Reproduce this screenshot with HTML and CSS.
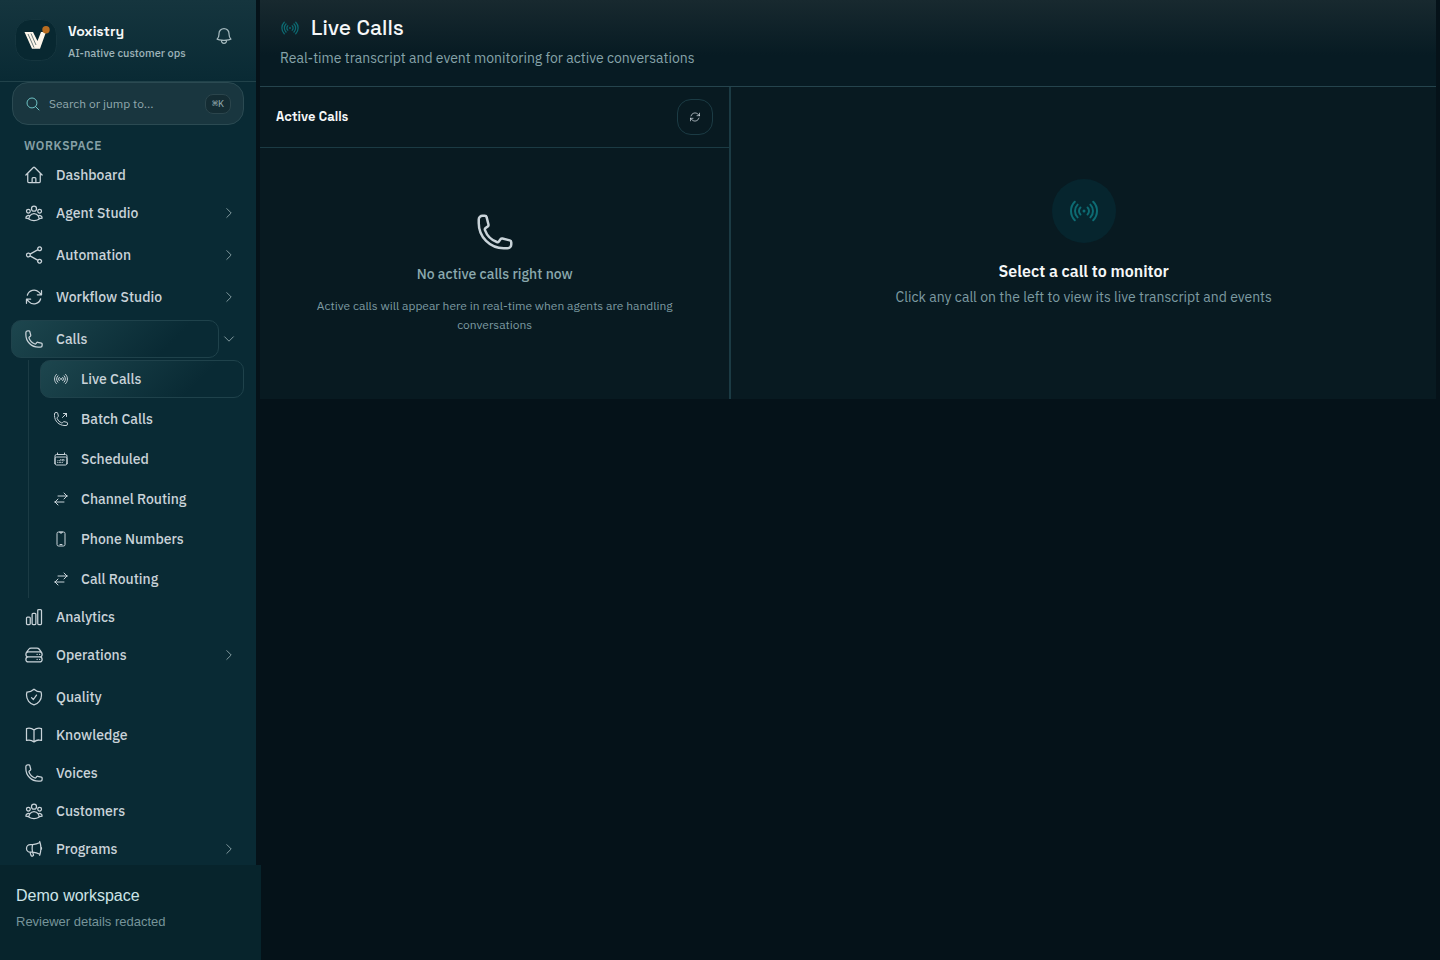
FILE: index.html
```html
<!DOCTYPE html>
<html lang="en">
<head>
<meta charset="utf-8">
<meta name="viewport" content="width=device-width, initial-scale=1">
<title>Live Calls - Voxistry</title>
<link rel="stylesheet" href="styles.css">
</head>
<body>
<svg class="sprite" aria-hidden="true">
  <symbol id="home" viewBox="0 0 24 24"><path d="m2.25 12 8.954-8.955c.44-.439 1.152-.439 1.591 0L21.75 12M4.5 9.75v10.125c0 .621.504 1.125 1.125 1.125H9.75v-4.875c0-.621.504-1.125 1.125-1.125h2.25c.621 0 1.125.504 1.125 1.125V21h4.125c.621 0 1.125-.504 1.125-1.125V9.75M8.25 21h8.25"/></symbol>
  <symbol id="group" viewBox="0 0 24 24"><path d="M18 18.72a9.094 9.094 0 0 0 3.741-.479 3 3 0 0 0-4.682-2.72m.94 3.198.001.031c0 .225-.012.447-.037.666A11.944 11.944 0 0 1 12 21c-2.17 0-4.207-.576-5.963-1.584A6.062 6.062 0 0 1 6 18.719m12 0a5.971 5.971 0 0 0-.941-3.197m0 0A5.995 5.995 0 0 0 12 12.75a5.995 5.995 0 0 0-5.058 2.772m0 0a3 3 0 0 0-4.681 2.72 8.986 8.986 0 0 0 3.74.477m.94-3.197a5.971 5.971 0 0 0-.94 3.197M15 6.75a3 3 0 1 1-6 0 3 3 0 0 1 6 0Zm6 3a2.25 2.25 0 1 1-4.5 0 2.25 2.25 0 0 1 4.5 0Zm-13.5 0a2.25 2.25 0 1 1-4.5 0 2.25 2.25 0 0 1 4.5 0Z"/></symbol>
  <symbol id="share" viewBox="0 0 24 24"><path d="M7.217 10.907a2.25 2.25 0 1 0 0 2.186m0-2.186c.18.324.283.696.283 1.093s-.103.77-.283 1.093m0-2.186 9.566-5.314m-9.566 7.5 9.566 5.314m0 0a2.25 2.25 0 1 0 3.935 2.186 2.25 2.25 0 0 0-3.935-2.186Zm0-12.814a2.25 2.25 0 1 0 3.933-2.185 2.25 2.25 0 0 0-3.933 2.185Z"/></symbol>
  <symbol id="refresh" viewBox="0 0 24 24"><path d="M16.023 9.348h4.992v-.001M2.985 19.644v-4.992m0 0h4.992m-4.993 0 3.181 3.183a8.25 8.25 0 0 0 13.803-3.7M4.031 9.865a8.25 8.25 0 0 1 13.803-3.7l3.181 3.182m0-4.991v4.99"/></symbol>
  <symbol id="phone" viewBox="0 0 24 24"><path d="M2.25 6.75c0 8.284 6.716 15 15 15h2.25a2.25 2.25 0 0 0 2.25-2.25v-1.372c0-.516-.351-.966-.852-1.091l-4.423-1.106c-.44-.11-.902.055-1.173.417l-.97 1.293c-.282.376-.769.542-1.21.38a12.035 12.035 0 0 1-7.143-7.143c-.162-.441.004-.928.38-1.21l1.293-.97c.363-.271.527-.734.417-1.173L6.963 3.102a1.125 1.125 0 0 0-1.091-.852H4.5A2.25 2.25 0 0 0 2.25 4.5v2.25Z"/></symbol>
  <symbol id="phone-out" viewBox="0 0 24 24"><path d="M20.25 3.75v4.5m0-4.5h-4.5m4.5 0-6 6m3 12c-8.284 0-15-6.716-15-15V4.5A2.25 2.25 0 0 1 4.5 2.25h1.372c.516 0 .966.351 1.091.852l1.106 4.423c.11.44-.054.902-.417 1.173l-1.293.97a1.062 1.062 0 0 0-.38 1.21 12.035 12.035 0 0 0 7.143 7.143c.441.162.928-.004 1.21-.38l.97-1.293a1.125 1.125 0 0 1 1.173-.417l4.423 1.106c.5.125.852.575.852 1.091V19.5a2.25 2.25 0 0 1-2.25 2.25h-2.25Z"/></symbol>
  <symbol id="signal" viewBox="0 0 24 24"><path d="M9.348 14.652a3.75 3.75 0 0 1 0-5.304m5.304 0a3.75 3.75 0 0 1 0 5.304m-7.425 2.121a6.75 6.75 0 0 1 0-9.546m9.546 0a6.75 6.75 0 0 1 0 9.546M5.106 18.894c-3.808-3.807-3.808-9.98 0-13.788m13.788 0c3.808 3.807 3.808 9.98 0 13.788M12 12h.008v.008H12V12Zm.375 0a.375.375 0 1 1-.75 0 .375.375 0 0 1 .75 0Z"/></symbol>
  <symbol id="calendar" viewBox="0 0 24 24"><path d="M6.75 3v2.25M17.25 3v2.25M3 18.75V7.5a2.25 2.25 0 0 1 2.25-2.25h13.5A2.25 2.25 0 0 1 21 7.5v11.25m-18 0A2.25 2.25 0 0 0 5.250 21h13.5A2.25 2.25 0 0 0 21 18.75m-18 0v-7.5A2.25 2.25 0 0 1 5.25 9h13.5A2.25 2.25 0 0 1 21 11.25v7.5m-9-6h.008v.008H12v-.008ZM12 15h.008v.008H12V15Zm0 2.25h.008v.008H12v-.008ZM9.75 15h.008v.008H9.75V15Zm0 2.25h.008v.008H9.75v-.008ZM7.5 15h.008v.008H7.5V15Zm0 2.25h.008v.008H7.5v-.008Zm6.75-4.5h.008v.008h-.008v-.008Zm0 2.25h.008v.008h-.008V15Zm0 2.25h.008v.008h-.008v-.008Zm2.25-4.5h.008v.008H16.5v-.008Zm0 2.25h.008v.008H16.5V15Z"/></symbol>
  <symbol id="swap" viewBox="0 0 24 24"><path d="M7.5 21 3 16.5m0 0L7.5 12M3 16.5h13.5m0-13.5L21 7.5m0 0L16.5 12M21 7.5H7.5"/></symbol>
  <symbol id="mobile" viewBox="0 0 24 24"><path d="M10.5 1.5H8.25A2.25 2.25 0 0 0 6 3.75v16.5a2.25 2.25 0 0 0 2.25 2.25h7.5A2.25 2.25 0 0 0 18 20.25V3.75a2.25 2.25 0 0 0-2.25-2.25H13.5m-3 0V3h3V1.5m-3 0h3m-3 18.75h3"/></symbol>
  <symbol id="chart" viewBox="0 0 24 24"><path d="M3 13.125C3 12.504 3.504 12 4.125 12h2.25c.621 0 1.125.504 1.125 1.125v6.75C7.5 20.496 6.996 21 6.375 21h-2.25A1.125 1.125 0 0 1 3 19.875v-6.75ZM9.75 8.625c0-.621.504-1.125 1.125-1.125h2.25c.621 0 1.125.504 1.125 1.125v11.25c0 .621-.504 1.125-1.125 1.125h-2.25a1.125 1.125 0 0 1-1.125-1.125V8.625ZM16.5 4.125c0-.621.504-1.125 1.125-1.125h2.25C20.496 3 21 3.504 21 4.125v15.75c0 .621-.504 1.125-1.125 1.125h-2.25a1.125 1.125 0 0 1-1.125-1.125V4.125Z"/></symbol>
  <symbol id="server" viewBox="0 0 24 24"><path d="M5.25 14.25h13.5m-13.5 0a3 3 0 0 1-3-3m3 3a3 3 0 1 0 0 6h13.5a3 3 0 1 0 0-6m-16.5-3a3 3 0 0 1 3-3h13.5a3 3 0 0 1 3 3m-19.5 0a4.5 4.5 0 0 1 .9-2.7L5.737 5.1a3.375 3.375 0 0 1 2.7-1.35h7.126c1.062 0 2.062.5 2.7 1.35l2.587 3.45a4.5 4.5 0 0 1 .9 2.7m0 0a3 3 0 0 1-3 3m0 3h.008v.008h-.008v-.008Zm0-6h.008v.008h-.008v-.008Zm-3 6h.008v.008h-.008v-.008Zm0-6h.008v.008h-.008v-.008Z"/></symbol>
  <symbol id="shield" viewBox="0 0 24 24"><path d="M9 12.75 11.25 15 15 9.75m-3-7.036A11.959 11.959 0 0 1 3.598 6 11.99 11.99 0 0 0 3 9.749c0 5.592 3.824 10.29 9 11.623 5.176-1.332 9-6.03 9-11.622 0-1.31-.21-2.571-.598-3.751h-.152c-3.196 0-6.1-1.248-8.25-3.285Z"/></symbol>
  <symbol id="book" viewBox="0 0 24 24"><path d="M12 6.042A8.967 8.967 0 0 0 6 3.75c-1.052 0-2.062.18-3 .512v14.25A8.987 8.987 0 0 1 6 18c2.305 0 4.408.867 6 2.292m0-14.25a8.966 8.966 0 0 1 6-2.292c1.052 0 2.062.18 3 .512v14.25A8.987 8.987 0 0 0 18 18a8.967 8.967 0 0 0-6 2.292m0-14.25v14.25"/></symbol>
  <symbol id="megaphone" viewBox="0 0 24 24"><path d="M10.34 15.84c-.688-.06-1.386-.09-2.09-.09H7.5a4.5 4.5 0 1 1 0-9h.75c.704 0 1.402-.03 2.09-.09m0 9.18c.253.962.584 1.892.985 2.783.247.55.06 1.21-.463 1.511l-.657.38c-.551.318-1.26.117-1.527-.461a20.845 20.845 0 0 1-1.44-4.282m3.102.069a18.03 18.03 0 0 1-.59-4.59c0-1.586.205-3.124.59-4.59m0 9.18a23.848 23.848 0 0 1 8.835 2.535M10.34 6.66a23.847 23.847 0 0 0 8.835-2.535m0 0A23.74 23.74 0 0 0 18.795 3m.38 1.125a23.91 23.91 0 0 1 1.014 5.395m-1.014 8.855c-.118.38-.245.754-.38 1.125m.38-1.125a23.91 23.91 0 0 0 1.014-5.395m0-3.46c.495.413.811 1.035.811 1.73 0 .695-.316 1.317-.811 1.73m0-3.46a24.347 24.347 0 0 1 0 3.46"/></symbol>
  <symbol id="bell" viewBox="0 0 24 24"><path d="M14.857 17.082a23.848 23.848 0 0 0 5.454-1.31A8.967 8.967 0 0 1 18 9.75V9A6 6 0 0 0 6 9v.75a8.967 8.967 0 0 1-2.312 6.022c1.733.64 3.56 1.085 5.455 1.31m5.714 0a24.255 24.255 0 0 1-5.714 0m5.714 0a3 3 0 1 1-5.714 0"/></symbol>
  <symbol id="search" viewBox="0 0 24 24"><path d="m21 21-5.197-5.197m0 0A7.5 7.5 0 1 0 5.196 5.196a7.5 7.5 0 0 0 10.607 10.607Z"/></symbol>
  <symbol id="right" viewBox="0 0 24 24"><path d="m8.25 4.5 7.5 7.5-7.5 7.5"/></symbol>
  <symbol id="down" viewBox="0 0 24 24"><path d="m19.5 8.25-7.5 7.5-7.5-7.5"/></symbol>
</svg>

<div class="app">
  <aside class="sidebar">
    <header class="brand">
      <svg class="brand-logo" viewBox="0 0 42 42" aria-hidden="true">
        <rect class="logo-tile" x=".5" y=".5" width="41" height="41" rx="15"/>
        <path class="logo-mark" d="M9.500 13H18L22.500 22L26 13H31L25 29.700H17Z"/>
        <path class="logo-cut" d="m13 15 6 13.500M16 14.500l5 11.500"/>
        <circle class="logo-dot" cx="31" cy="10.700" r="3.700"/>
      </svg>
      <div class="brand-text">
        <strong class="brand-name">Voxistry</strong>
        <span class="brand-tag">AI-native customer ops</span>
      </div>
      <button class="bell" type="button" aria-label="Notifications"><svg class="icon icon-lg"><use href="#bell"/></svg></button>
    </header>

    <div class="search">
      <svg class="icon icon-md"><use href="#search"/></svg>
      <input class="search-input" type="search" aria-label="Search or jump to" placeholder="Search or jump to...">
      <kbd class="search-key">⌘K</kbd>
    </div>

    <nav class="nav" aria-label="Workspace">
      <h2 class="nav-title">Workspace</h2>
      <a class="nav-link" href="#"><svg class="icon icon-lg"><use href="#home"/></svg>Dashboard</a>
      <div class="nav-group"><a class="nav-link" href="#"><svg class="icon icon-lg"><use href="#group"/></svg>Agent Studio</a><button class="nav-toggle" type="button" aria-label="Expand Agent Studio"><svg class="icon icon-sm"><use href="#right"/></svg></button></div>
      <div class="nav-group"><a class="nav-link" href="#"><svg class="icon icon-lg"><use href="#share"/></svg>Automation</a><button class="nav-toggle" type="button" aria-label="Expand Automation"><svg class="icon icon-sm"><use href="#right"/></svg></button></div>
      <div class="nav-group"><a class="nav-link" href="#"><svg class="icon icon-lg"><use href="#refresh"/></svg>Workflow Studio</a><button class="nav-toggle" type="button" aria-label="Expand Workflow Studio"><svg class="icon icon-sm"><use href="#right"/></svg></button></div>
      <div class="nav-group nav-group-open"><a class="nav-link nav-link-active" href="#"><svg class="icon icon-lg"><use href="#phone"/></svg>Calls</a><button class="nav-toggle" type="button" aria-label="Collapse Calls"><svg class="icon icon-sm"><use href="#down"/></svg></button></div>
      <div class="subnav">
        <a class="nav-link sub-link nav-link-active" href="#" aria-current="page"><svg class="icon icon-md"><use href="#signal"/></svg>Live Calls</a>
        <a class="nav-link sub-link" href="#"><svg class="icon icon-md"><use href="#phone-out"/></svg>Batch Calls</a>
        <a class="nav-link sub-link" href="#"><svg class="icon icon-md"><use href="#calendar"/></svg>Scheduled</a>
        <a class="nav-link sub-link" href="#"><svg class="icon icon-md"><use href="#swap"/></svg>Channel Routing</a>
        <a class="nav-link sub-link" href="#"><svg class="icon icon-md"><use href="#mobile"/></svg>Phone Numbers</a>
        <a class="nav-link sub-link" href="#"><svg class="icon icon-md"><use href="#swap"/></svg>Call Routing</a>
      </div>
      <a class="nav-link" href="#"><svg class="icon icon-lg"><use href="#chart"/></svg>Analytics</a>
      <div class="nav-group"><a class="nav-link" href="#"><svg class="icon icon-lg"><use href="#server"/></svg>Operations</a><button class="nav-toggle" type="button" aria-label="Expand Operations"><svg class="icon icon-sm"><use href="#right"/></svg></button></div>
      <a class="nav-link" href="#"><svg class="icon icon-lg"><use href="#shield"/></svg>Quality</a>
      <a class="nav-link" href="#"><svg class="icon icon-lg"><use href="#book"/></svg>Knowledge</a>
      <a class="nav-link" href="#"><svg class="icon icon-lg"><use href="#phone"/></svg>Voices</a>
      <a class="nav-link" href="#"><svg class="icon icon-lg"><use href="#group"/></svg>Customers</a>
      <div class="nav-group"><a class="nav-link" href="#"><svg class="icon icon-lg"><use href="#megaphone"/></svg>Programs</a><button class="nav-toggle" type="button" aria-label="Expand Programs"><svg class="icon icon-sm"><use href="#right"/></svg></button></div>
    </nav>

    <footer class="account">
      <span class="account-name">Demo workspace</span>
      <span class="account-note">Reviewer details redacted</span>
    </footer>
  </aside>

  <main class="main">
    <header class="page-head">
      <div class="page-title-row">
        <svg class="icon icon-lg icon-accent"><use href="#signal"/></svg>
        <h1 class="page-title">Live Calls</h1>
      </div>
      <p class="page-note">Real-time transcript and event monitoring for active conversations</p>
    </header>
    <div class="panels">
      <section class="calls">
        <header class="calls-head">
          <h2 class="calls-title">Active Calls</h2>
          <button class="refresh" type="button" aria-label="Refresh"><svg class="icon icon-xs"><use href="#refresh"/></svg></button>
        </header>
        <div class="calls-empty">
          <svg class="icon icon-xl"><use href="#phone"/></svg>
          <p class="calls-empty-title">No active calls right now</p>
          <p class="calls-empty-note">Active calls will appear here in real-time when agents are handling conversations</p>
        </div>
      </section>
      <section class="monitor">
        <span class="monitor-badge"><svg class="icon icon-2xl"><use href="#signal"/></svg></span>
        <h2 class="monitor-title">Select a call to monitor</h2>
        <p class="monitor-note">Click any call on the left to view its live transcript and events</p>
      </section>
    </div>
  </main>
</div>
</body>
</html>
```
FILE: styles.css
```css
:root {
  --page: #051219;
  --side: #092a34;
  --panel: #081a21;
  --line: #1b3b44;
  --text: #c9d3d9;
  --muted: #86a3a9;
  --accent: #0d6b73;
  --body: "IBM Plex Sans", Roboto, "Noto Sans", sans-serif;
  --display: "Space Grotesk", Inter, sans-serif;
  --mono: "IBM Plex Mono", "Liberation Mono", monospace;
}

* { box-sizing: border-box; }

body {
  margin: 0;
  background: var(--page);
  color: var(--text);
  font: 14px/20px var(--body);
}

h1, h2, p { margin: 0; }
button { padding: 0; border: 0; background: none; color: inherit; cursor: pointer; }
a { color: inherit; text-decoration: none; }

.sprite { display: none; }
.icon { flex: none; display: block; fill: none; stroke: currentColor; stroke-width: 1.5; stroke-linecap: round; stroke-linejoin: round; }
.icon-xs { width: 12px; height: 12px; }
.icon-sm { width: 14px; height: 14px; }
.icon-md { width: 16px; height: 16px; }
.icon-lg { width: 20px; height: 20px; }
.icon-xl { width: 40px; height: 40px; }
.icon-2xl { width: 32px; height: 32px; }
.icon-accent { color: var(--accent); }

.app { display: flex; height: 100vh; gap: 4px; padding-right: 4px; }

.sidebar {
  flex: none;
  display: flex;
  flex-direction: column;
  width: 256px;
  background: var(--side);
}

.brand {
  flex: none;
  display: flex;
  align-items: flex-start;
  gap: 11px;
  padding: 19px 22px 18px 15px;
  border-bottom: 1px solid #21424a;
  background: linear-gradient(#15353e, #092a34);
}
.brand-logo { flex: none; width: 42px; height: 42px; }
.logo-tile { fill: #082831; stroke: #15353e; }
.logo-mark { fill: #fdf6ea; }
.logo-cut { fill: none; stroke: #082831; stroke-width: .6; }
.logo-dot { fill: #b96d20; }
.brand-text { flex: 1; display: flex; flex-direction: column; gap: 2px; padding-top: 2px; }
.brand-name { font: 700 14px/20px var(--display); color: #f5f7f8; }
.brand-tag { font-size: 11px; line-height: 20px; font-weight: 500; color: #9db3b8; }
.bell { padding-top: 7px; color: #a5b9be; }

.search {
  flex: none;
  display: flex;
  align-items: center;
  gap: 8px;
  height: 43px;
  margin: 0 12px;
  padding: 0 12px;
  border: 1px solid #2b4a52;
  border-radius: 16px;
  background: #19363f;
  color: #6fc3c5;
}
.search-input {
  flex: 1;
  min-width: 0;
  padding: 0;
  border: 0;
  outline: 0;
  background: none;
  color: var(--text);
  font: 12px/20px var(--body);
}
.search-input::placeholder { color: #92a9ae; opacity: 1; }
.search-key {
  padding: 0 6px;
  border: 1px solid #2b454c;
  border-radius: 8px;
  background: #142c33;
  color: #92a9ae;
  font: 10px/18px var(--mono);
}

.nav { flex: 1; min-height: 0; overflow: hidden; padding: 11px 12px 0; }
.nav-title {
  margin: 0 12px;
  font: 600 12px/20px var(--body);
  letter-spacing: .05em;
  text-transform: uppercase;
  color: #86a0a6;
}
.nav-link {
  display: flex;
  align-items: center;
  gap: 12px;
  height: 38px;
  padding: 0 11px;
  border: 1px solid transparent;
  border-radius: 10px;
  font-weight: 500;
}
.nav-link-active {
  border-color: #1f424b;
  background: linear-gradient(135deg, #1d464e, #092a34 75%);
}
.nav-group { display: flex; align-items: center; margin-bottom: 4px; }
.nav-group .nav-link { flex: 1; }
.nav-group-open { margin: 0 0 2px -1px; }
.nav-group-open .nav-link { padding-left: 12px; }
.nav-toggle { flex: none; padding: 0 8px 0 3px; color: #91a8ad; }

.subnav {
  display: flex;
  flex-direction: column;
  gap: 2px;
  margin-left: 16px;
  padding-left: 11px;
  border-left: 1px solid var(--line);
}
.sub-link { padding: 0 12px; }

.account {
  z-index: 1;
  flex: none;
  display: flex;
  flex-direction: column;
  gap: 6px;
  width: 261px;
  height: 95px;
  padding: 21px 16px;
  background: #07242c;
  font-family: "Liberation Sans", Arial, sans-serif;
}
.account-name { font-size: 16px; line-height: 20px; color: #cde4e8; }
.account-note { font-size: 13px; line-height: 20px; color: #76949a; }

.main { flex: 1; min-width: 0; }
.page-head {
  padding: 12px 20px 18px;
  border-bottom: 1px solid #25444d;
  background: linear-gradient(#18292f, #071b23 64%);
}
.page-title-row { display: flex; align-items: center; gap: 11px; height: 32px; }
.page-title { font: 500 21px/32px var(--display); color: #f5f7f8; }
.page-note { margin-top: 4px; line-height: 20px; color: var(--muted); }

.panels { display: grid; grid-template-columns: 2fr 3fr; background: var(--panel); }
.calls { border-right: 1px solid var(--line); }
.calls-head {
  display: flex;
  align-items: center;
  justify-content: space-between;
  padding: 12px 16px;
  border-bottom: 1px solid var(--line);
}
.calls-title { font: 600 13px/20px var(--display); color: #f5f7f8; }
.refresh {
  display: grid;
  place-items: center;
  width: 36px;
  height: 36px;
  border: 1px solid var(--line);
  border-radius: 14px;
}
.calls-empty {
  display: flex;
  flex-direction: column;
  align-items: center;
  padding: 64px 48px;
  text-align: center;
}
.calls-empty-title { margin-top: 12px; font-weight: 500; line-height: 20px; color: #8ba9ae; }
.calls-empty-note { margin-top: 12px; font-size: 12px; line-height: 19px; color: #7d9ba1; }

.monitor {
  display: flex;
  flex-direction: column;
  align-items: center;
  padding: 92px 24px;
  border-left: 1px solid var(--line);
  text-align: center;
}
.monitor-badge {
  display: grid;
  place-items: center;
  width: 64px;
  height: 64px;
  border-radius: 50%;
  background: #06252e;
  color: var(--accent);
}
.monitor-title { margin-top: 16px; font: 600 16px/24px var(--body); color: #f5f7f8; }
.monitor-note { margin-top: 4px; line-height: 20px; color: #7d9ba1; }
```
